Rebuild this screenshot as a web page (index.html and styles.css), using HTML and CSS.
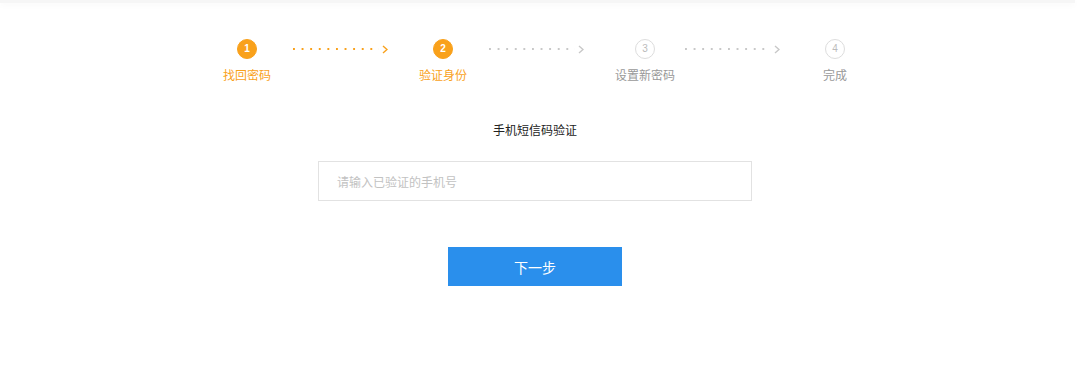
FILE: index.html
```html
<!DOCTYPE html>
<html lang="zh-CN">

<head>
    <meta charset="UTF-8">
    <meta name="viewport" content="width=device-width, initial-scale=1.0">
    <title>找回密码</title>
    <link rel="stylesheet" href="styles.css">
</head>

<body>
    <div class="topbar"></div>

    <div class="page">
        <!-- 步骤条 -->
        <div class="steps">
            <div class="step active">
                <span class="num">1</span>
                <span class="label">找回密码</span>
            </div>
            <div class="line active line-1">
                <span class="dots"></span>
                <svg width="6" height="9" viewBox="0 0 6 9"><polyline points="1,1 5,4.5 1,8" fill="none" stroke="currentColor" stroke-width="1.4"/></svg>
            </div>
            <div class="step active">
                <span class="num">2</span>
                <span class="label">验证身份</span>
            </div>
            <div class="line line-2">
                <span class="dots"></span>
                <svg width="6" height="9" viewBox="0 0 6 9"><polyline points="1,1 5,4.5 1,8" fill="none" stroke="currentColor" stroke-width="1.4"/></svg>
            </div>
            <div class="step">
                <span class="num">3</span>
                <span class="label">设置新密码</span>
            </div>
            <div class="line line-3">
                <span class="dots"></span>
                <svg width="6" height="9" viewBox="0 0 6 9"><polyline points="1,1 5,4.5 1,8" fill="none" stroke="currentColor" stroke-width="1.4"/></svg>
            </div>
            <div class="step">
                <span class="num">4</span>
                <span class="label">完成</span>
            </div>
        </div>

        <div class="form">
            <p class="title">手机短信码验证</p>
            <input type="text" class="phone" placeholder="请输入已验证的手机号">
            <button class="next">下一步</button>
        </div>
    </div>
</body>

</html>
```

FILE: styles.css
```css
body {
    margin: 0;
    padding: 0;
    background: #fff;
    font-family: "Noto Sans CJK SC", "Noto Sans", sans-serif;
    font-size: 12px;
    color: #333;
}

.topbar {
    width: 1075px;
    height: 3px;
    background: #f6f6f6;
    box-shadow: 0 2px 6px rgba(0, 0, 0, 0.04);
}

.page {
    width: 1070px;
}

.steps {
    display: flex;
    align-items: flex-start;
    padding-left: 223px;
    margin-top: 36px;
}

.step {
    display: flex;
    flex-direction: column;
    align-items: center;
}

.num {
    width: 18px;
    height: 18px;
    border-radius: 50%;
    border: 1px solid #ddd;
    background: #fff;
    color: #bbb;
    font-family: "Liberation Sans", Arial, sans-serif;
    font-size: 10px;
    line-height: 18px;
    text-align: center;
}

.label {
    margin-top: 8px;
    line-height: 16px;
    color: #999;
}

.step.active .num {
    border-color: #f9a11b;
    background: #f9a11b;
    color: #fff;
    font-weight: bold;
}

.step.active .label {
    color: #f9a11b;
}

.line {
    display: flex;
    align-items: center;
    height: 20px;
    color: #c8c8c8;
}

.line.active {
    color: #f9a11b;
}

.dots {
    width: 86px;
    height: 2px;
    background: linear-gradient(90deg, currentColor 2px, transparent 2px);
    background-size: 8.6px 2px;
    margin-right: 3px;
}

.line-1 {
    margin: 0 31px 0 22px;
}

.line-2 {
    margin: 0 31px 0 22px;
}

.line-3 {
    margin: 0 43px 0 10px;
}

.form {
    display: flex;
    flex-direction: column;
    align-items: center;
}

.title {
    margin: 39px 0 0;
    line-height: 16px;
    color: #222;
}

.phone {
    width: 434px;
    height: 40px;
    margin-top: 23px;
    border: 1px solid #e2e2e2;
    padding: 0 18px;
    box-sizing: border-box;
    font-family: inherit;
    font-size: 12px;
    color: #333;
    outline: none;
}

.phone::placeholder {
    color: #c2c2c2;
}

.next {
    width: 174px;
    height: 39px;
    margin-top: 46px;
    border: none;
    background: #2a8fec;
    color: #fff;
    font-family: inherit;
    font-size: 14px;
    cursor: pointer;
}
```
